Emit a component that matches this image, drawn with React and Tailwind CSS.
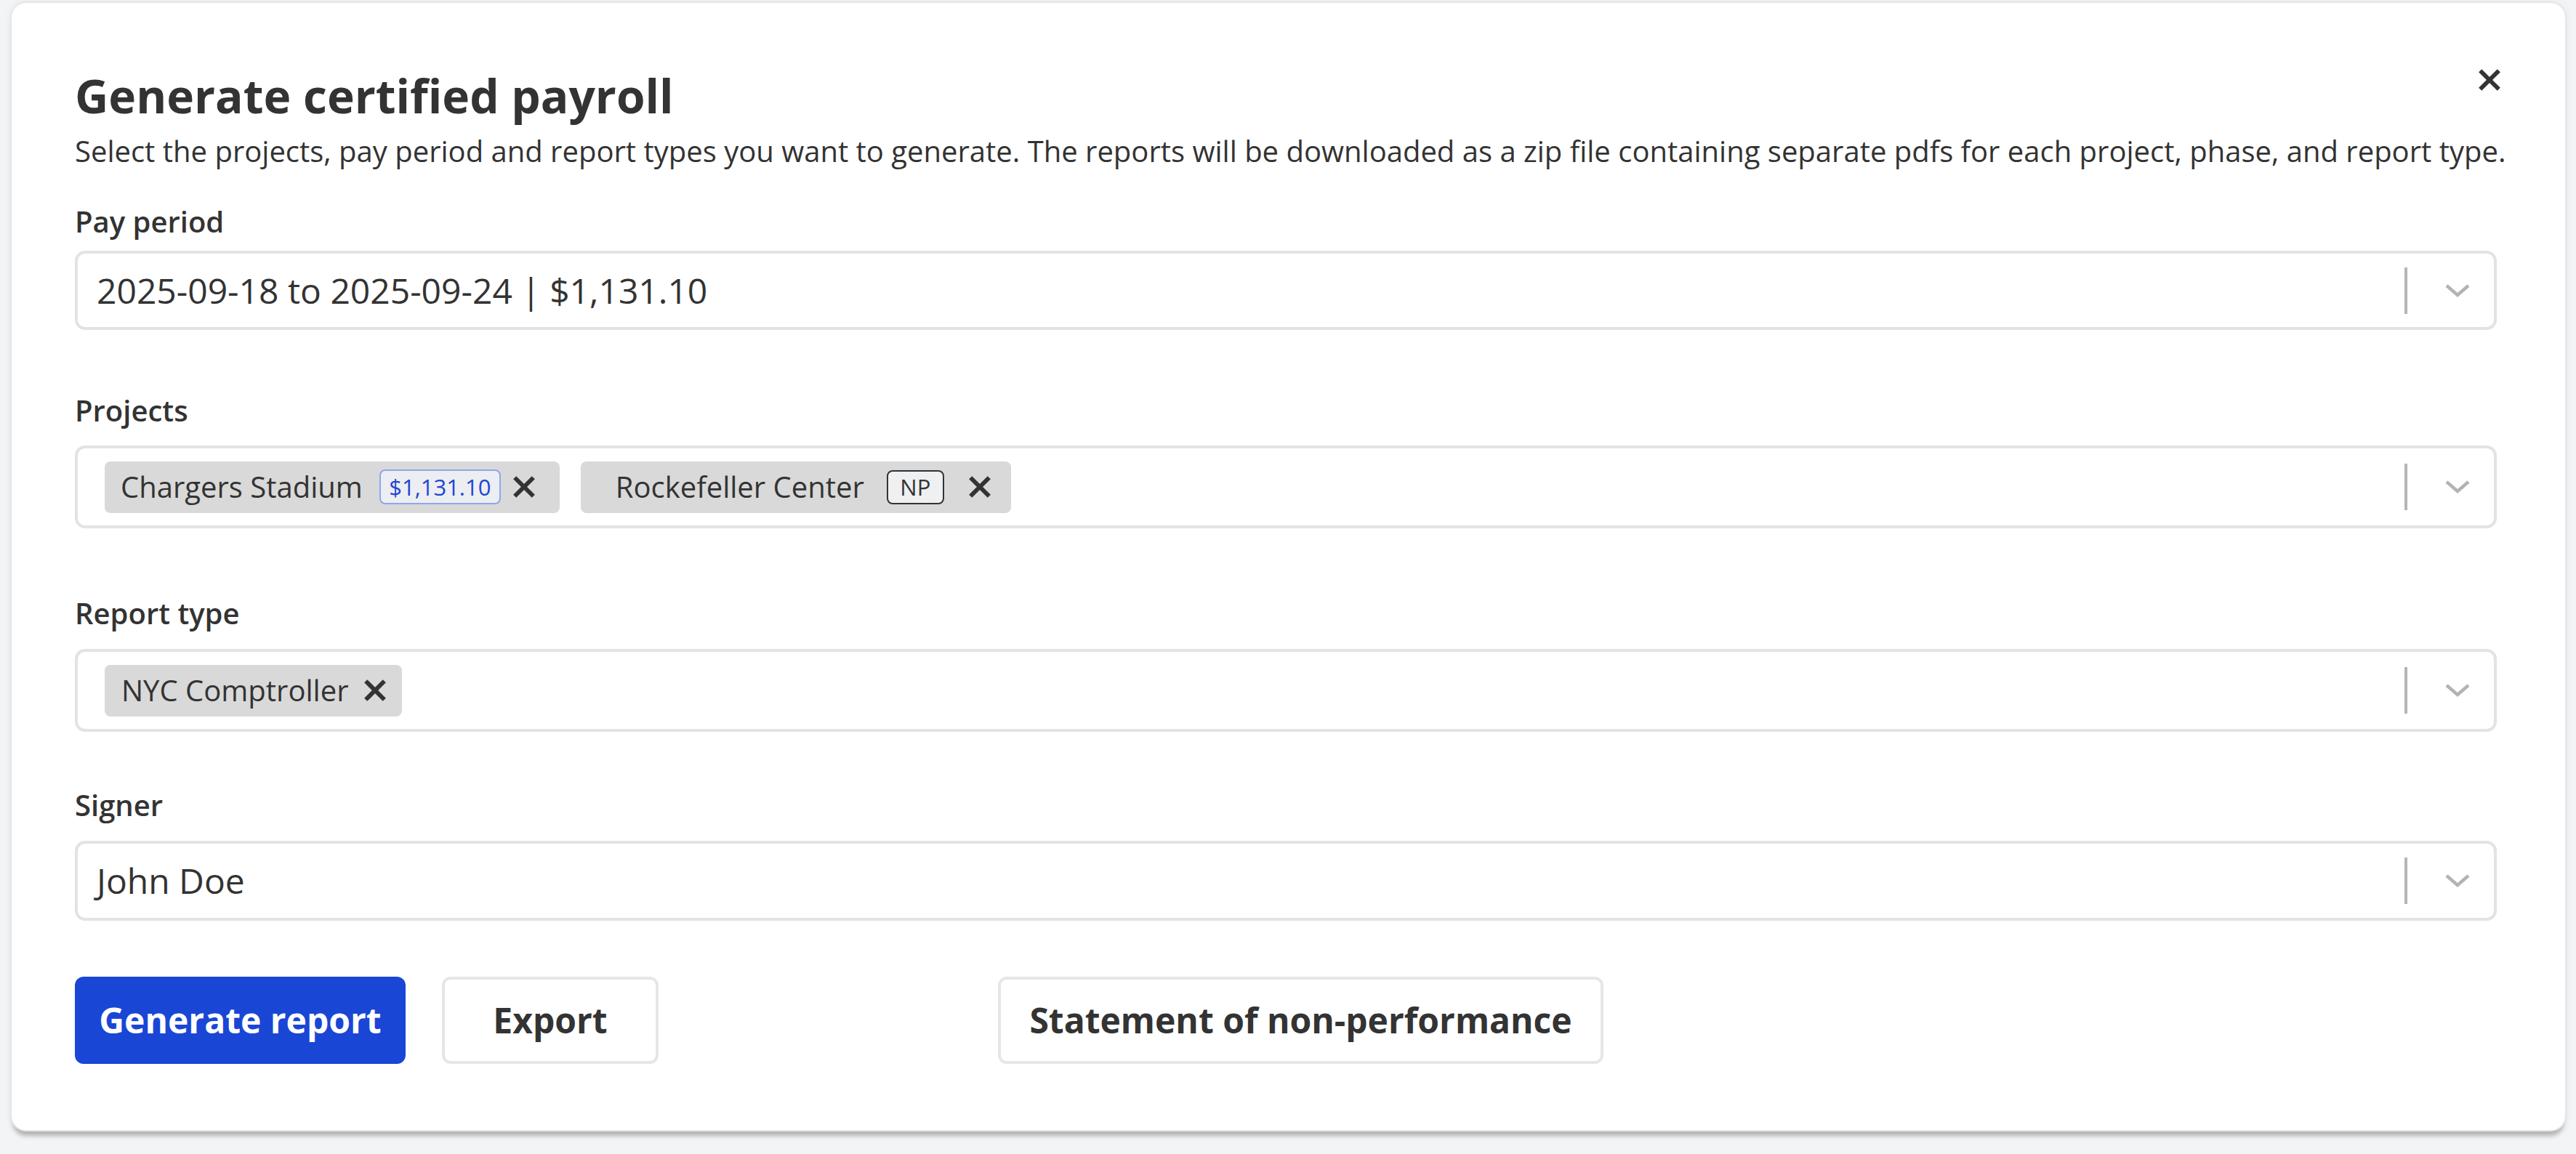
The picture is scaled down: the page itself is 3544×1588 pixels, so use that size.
import React from "react";

// Certified payroll modal, drawn at the screenshot's ~2.26x scale.

const Chevron = () => (
  <svg width="34" height="20" viewBox="0 0 34 20" fill="none">
    <polyline points="2,3 17,16 32,3" stroke="#b3b3b3" strokeWidth="4.5" />
  </svg>
);

const Cross = ({ size = 30, stroke = 5.5 }) => (
  <svg width={size} height={size} viewBox="0 0 30 30" fill="none">
    <line x1="3" y1="3" x2="27" y2="27" stroke="#333333" strokeWidth={stroke} />
    <line x1="27" y1="3" x2="3" y2="27" stroke="#333333" strokeWidth={stroke} />
  </svg>
);

const Indicators = () => (
  <div className="flex items-center">
    <span className="block w-[4px] h-[64px] bg-[#b5b5b5]" />
    <span className="ml-[52px] mr-[33px] flex items-center">
      <Chevron />
    </span>
  </div>
);

const SingleSelect = ({ value, height }) => (
  <div
    className={`flex items-center rounded-[14px] border-[4px] border-[#e3e3e3] bg-white pl-[26px] ${height}`}
  >
    <span className="flex-1 text-[48px] leading-[62px] text-[#333333]">{value}</span>
    <Indicators />
  </div>
);

const MultiSelect = ({ children }) => (
  <div className="flex h-[114px] items-center rounded-[14px] border-[4px] border-[#e3e3e3] bg-white pl-[37px]">
    <div className="flex flex-1 items-center gap-[29px]">{children}</div>
    <Indicators />
  </div>
);

const Label = ({ children, className }) => (
  <div className={`text-[40px] leading-[52px] font-semibold text-[#333333] ${className}`}>{children}</div>
);

export default function App() {
  return (
    <div className="w-full h-[1588px] bg-[#f3f4f5] pl-[16px] pt-[4px] font-['Open_Sans',sans-serif]">
      <div className="relative w-[3513px] h-[1551px] rounded-[20px] bg-white pl-[87px] pr-[94px] pt-[85px] shadow-[0_0_0_2px_#e6e6e6,0_10px_6px_-2px_rgba(0,0,0,0.26),0_0_14px_rgba(0,0,0,0.07)]">
        <button className="absolute right-[88px] top-[90px] flex items-center justify-center">
          <Cross size={32} stroke={5.5} />
        </button>

        <h1 className="text-[64px] leading-[86px] font-bold text-[#333333]">Generate certified payroll</h1>
        <p className="mt-[9px] text-[40px] leading-[48px] text-[#333333] whitespace-nowrap">
          Select the projects, pay period and report types you want to generate. The reports will be downloaded as a zip file containing separate pdfs for each project, phase, and report type.
        </p>

        <Label className="mt-[47px]">Pay period</Label>
        <div className="mt-[14px]">
          <SingleSelect value="2025-09-18 to 2025-09-24 | $1,131.10" height="h-[109px]" />
        </div>

        <Label className="mt-[85px]">Projects</Label>
        <div className="mt-[22px]">
          <MultiSelect>
            <div className="flex h-[71px] items-center rounded-[8px] bg-[#d9d9d9] pl-[22px] pr-[33px]">
              <span className="text-[40px] leading-[52px] text-[#333333]">Chargers Stadium</span>
              <span className="ml-[23px] flex h-[48px] w-[167px] items-center justify-center rounded-[8px] border-[2px] border-[#8fa6ee] bg-[#eceef2] text-[31px] leading-[40px] text-[#1f47d4]">
                $1,131.10
              </span>
              <span className="ml-[16px] flex items-center">
                <Cross size={32} stroke={5.5} />
              </span>
            </div>
            <div className="flex h-[71px] items-center rounded-[8px] bg-[#d9d9d9] pl-[48px] pr-[27px]">
              <span className="text-[40px] leading-[52px] text-[#333333]">Rockefeller Center</span>
              <span className="ml-[31px] flex h-[47px] w-[79px] items-center justify-center rounded-[8px] border-[2px] border-[#333333] bg-[#eef0f2] text-[31px] leading-[40px] text-[#333333]">
                NP
              </span>
              <span className="ml-[33px] flex items-center">
                <Cross size={32} stroke={5.5} />
              </span>
            </div>
          </MultiSelect>
        </div>

        <Label className="mt-[91px]">Report type</Label>
        <div className="mt-[23px]">
          <MultiSelect>
            <div className="flex h-[71px] items-center rounded-[8px] bg-[#d9d9d9] pl-[23px] pr-[21px]">
              <span className="text-[40px] leading-[52px] text-[#333333]">NYC Comptroller</span>
              <span className="ml-[20px] flex items-center">
                <Cross size={32} stroke={5.5} />
              </span>
            </div>
          </MultiSelect>
        </div>

        <Label className="mt-[75px]">Signer</Label>
        <div className="mt-[23px]">
          <SingleSelect value="John Doe" height="h-[110px]" />
        </div>

        <div className="mt-[77px] flex items-center">
          <button className="flex h-[120px] w-[455px] items-center justify-center rounded-[12px] bg-[#1a46d6] text-[48px] font-bold text-white">
            Generate report
          </button>
          <button className="ml-[50px] flex h-[120px] w-[298px] items-center justify-center rounded-[12px] border-[4px] border-[#e6e6e6] bg-white text-[48px] font-bold text-[#333333]">
            Export
          </button>
          <button className="ml-[467px] flex h-[120px] w-[833px] items-center justify-center rounded-[12px] border-[4px] border-[#e6e6e6] bg-white text-[48px] font-bold text-[#333333]">
            Statement of non-performance
          </button>
        </div>
      </div>
    </div>
  );
}
